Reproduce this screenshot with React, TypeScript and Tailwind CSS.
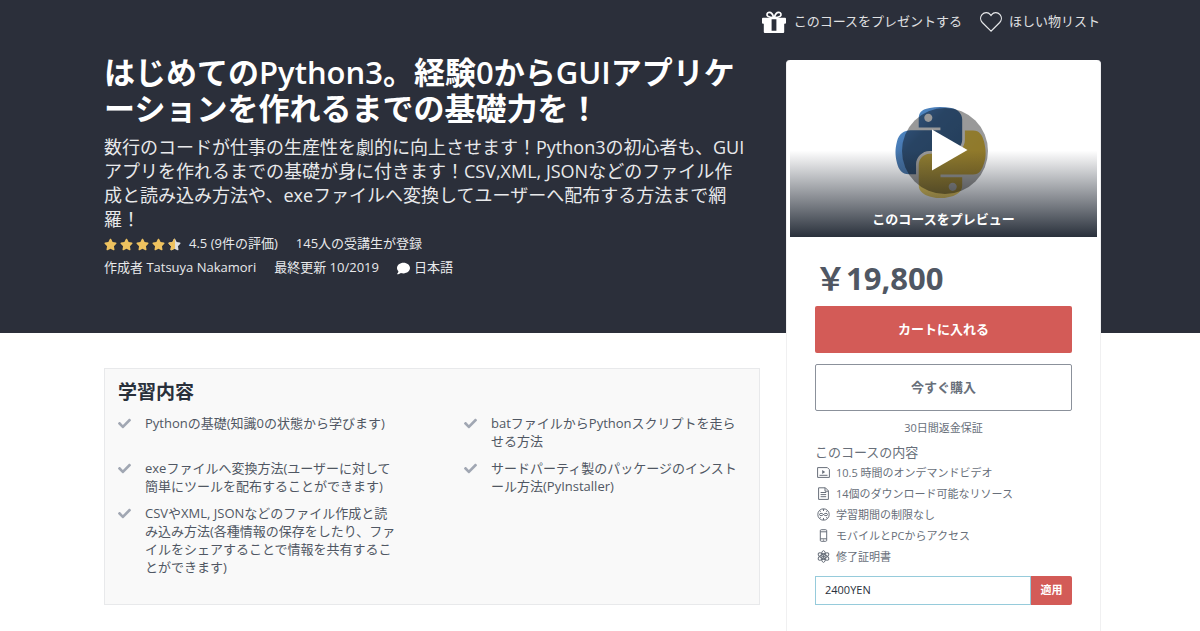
import React from 'react';
import { FaCheck, FaComment, FaStar } from 'react-icons/fa';

const learnItems = [
  'Pythonの基礎(知識0の状態から学びます)',
  'batファイルからPythonスクリプトを走らせる方法',
  'exeファイルへ変換方法(ユーザーに対して簡単にツールを配布することができます)',
  'サードパーティ製のパッケージのインストール方法(PyInstaller)',
  'CSVやXML, JSONなどのファイル作成と読み込み方法(各種情報の保存をしたり、ファイルをシェアすることで情報を共有することができます)',
];

const GiftIcon = () => (
  <svg viewBox="0 0 24 22" className="w-6 h-[22px]" aria-hidden="true">
    <g fill="none" stroke="#fff" strokeWidth="1.7">
      <path d="M11.6 6.6C11 3.6 9.2 1.2 7 1.3 4.8 1.4 4.3 4.2 6 5.4c1.3.9 3.4 1.2 5.6 1.2z" />
      <path d="M12.4 6.6C13 3.6 14.8 1.2 17 1.3c2.2.1 2.7 2.9 1 4.1-1.3.9-3.4 1.2-5.6 1.2z" />
    </g>
    <path
      fill="#fff"
      fillRule="evenodd"
      d="M1 6.8h22a1 1 0 0 1 1 1v4a1 1 0 0 1-1 1h-.8v8.2a1 1 0 0 1-1 1H2.8a1 1 0 0 1-1-1v-8.2H1a1 1 0 0 1-1-1v-4a1 1 0 0 1 1-1zM9.6 8.2v11.6h4.8V8.2z"
    />
  </svg>
);

const HeartIcon = () => (
  <svg viewBox="0 0 22 20" className="w-[22px] h-5" fill="none" stroke="#e8e9eb" strokeWidth="1.2" aria-hidden="true">
    <path d="M11 19.2 2.3 10.5C.2 8.3.1 4.9 2 2.6 4.3.1 8.3 0 10.3 2.6L11 3.5l.7-.9C13.7 0 17.7.1 20 2.6c1.9 2.3 1.8 5.7-.3 7.9z" />
  </svg>
);

const PythonLogo = () => (
  <svg viewBox="0 0 111 112" className="w-[91px] h-[91px]" aria-hidden="true">
    <defs>
      <linearGradient id="pyBlue" x1="0" y1="0" x2="1" y2="1">
        <stop offset="0" stopColor="#5a9fd4" />
        <stop offset=".3" stopColor="#4a7db8" />
        <stop offset=".4" stopColor="#4472a6" />
        <stop offset="1" stopColor="#3a6593" />
      </linearGradient>
      <linearGradient id="pyYellow" x1="0" y1="0" x2="1" y2="1">
        <stop offset="0" stopColor="#f2d65a" />
        <stop offset="1" stopColor="#f0c33c" />
      </linearGradient>
    </defs>
    <path
      fill="url(#pyBlue)"
      d="M54.9 0C50.3 0 46 .4 42.1 1.1 30.8 3.1 28.7 7.3 28.7 15v10.2h26.7v3.4H18.7c-7.8 0-14.6 4.7-16.7 13.5-2.5 10.2-2.6 16.6 0 27.2 1.9 7.9 6.4 13.5 14.2 13.5h9.2V70.6c0-8.8 7.6-16.6 16.7-16.6h26.7c7.4 0 13.4-6.1 13.4-13.6V15c0-7.2-6.1-12.7-13.4-13.9C64.1.4 59.5 0 54.9 0zM40.5 8.2c2.8 0 5 2.3 5 5.1s-2.2 5.1-5 5.1-5-2.3-5-5.1 2.2-5.1 5-5.1z"
    />
    <path
      fill="url(#pyYellow)"
      d="M85.5 28.7v11.9c0 9.2-7.8 17-16.7 17H42.1c-7.3 0-13.4 6.3-13.4 13.6v25.5c0 7.2 6.3 11.5 13.4 13.6 8.5 2.5 16.6 2.9 26.7 0 6.7-1.9 13.4-5.9 13.4-13.6V86.4H55.5v-3.4h40.1c7.8 0 10.7-5.4 13.4-13.5 2.8-8.4 2.7-16.5 0-27.2-1.9-7.7-5.6-13.5-13.4-13.5H85.5zM70.5 93.2c2.8 0 5 2.3 5 5.1s-2.2 5.1-5 5.1-5-2.3-5-5.1 2.2-5.1 5-5.1z"
    />
  </svg>
);

const HalfStar = () => (
  <span className="relative block">
    <FaStar className="text-[#dedfe0]" />
    <span className="absolute inset-y-0 left-0 w-1/2 overflow-hidden">
      <FaStar className="text-[#eec25f]" />
    </span>
  </span>
);

const includes: Array<{ label: string; icon: React.ReactNode }> = [
  {
    label: '10.5 時間のオンデマンドビデオ',
    icon: (
      <>
        <path d="M.6 1.6h9.8l2 2v7.8H.6zM2.5 9.3h8" />
        <path d="M5.2 3.9v4l3-2z" fill="currentColor" stroke="none" />
      </>
    ),
  },
  {
    label: '14個のダウンロード可能なリソース',
    icon: <path d="M1.6.8h6.8l3 3v8.6H1.6zM8 .8v3.4h3.4M3.6 5.5h5.6M3.6 7.6h5.6M3.6 9.7h5.6" />,
  },
  {
    label: '学習期間の制限なし',
    icon: (
      <>
        <circle cx="6.5" cy="6.5" r="5.7" />
        <path d="M6.5 1v2M6.5 10v2M2.5 2.5l1.2 1.2M10.5 2.5 9.3 3.7M2.5 10.5l1.2-1.2M10.5 10.5 9.3 9.3" />
        <path d="M6.5 6.5C5.2 4.9 2.5 4.9 2.5 6.5s2.7 1.6 4 0 4-1.6 4 0-2.7 1.6-4 0z" />
      </>
    ),
  },
  {
    label: 'モバイルとPCからアクセス',
    icon: <path d="M4.3.7h4.4a1 1 0 0 1 1 1v9.6a1 1 0 0 1-1 1H4.3a1 1 0 0 1-1-1V1.7a1 1 0 0 1 1-1zM3.3 2.8h6.4M3.3 9.8h6.4M6 11.1h1" />,
  },
  {
    label: '修了証明書',
    icon: (
      <>
        <ellipse cx="6.5" cy="6.5" rx="2.3" ry="5.9" />
        <ellipse cx="6.5" cy="6.5" rx="2.3" ry="5.9" transform="rotate(60 6.5 6.5)" />
        <ellipse cx="6.5" cy="6.5" rx="2.3" ry="5.9" transform="rotate(120 6.5 6.5)" />
        <circle cx="6.5" cy="6.5" r="1" fill="currentColor" />
      </>
    ),
  },
];

const TopLinks = () => (
  <nav className="col-start-2 col-span-3 row-start-1 h-11 flex items-center justify-end gap-[18px] pr-px text-[13px] text-[#e0e1e3]">
    <a href="#gift" className="flex items-center gap-2">
      <GiftIcon />
      このコースをプレゼントする
    </a>
    <a href="#wishlist" className="flex items-center gap-[7px]">
      <HeartIcon />
      ほしい物リスト
    </a>
  </nav>
);

const Hero = () => (
  <header className="col-start-2 row-start-2 pt-[10px] pb-[53px] text-[#e8e9eb]">
    <h1 className="text-[31px] leading-9 font-semibold text-white">
      はじめてのPython3。経験0からGUIアプリケ
      <wbr />
      ーションを作れるまでの基礎力を！
    </h1>
    <p className="mt-[9px] text-[18px] leading-6">
      数行のコードが仕事の生産性を劇的に向上させます！Python3の初心者も、GUI
      <br />
      アプリを作れるまでの基礎が身に付きます！CSV,XML, JSONなどのファイル作
      <br />
      成と読み込み方法や、exeファイルへ変換してユーザーへ配布する方法まで網
      <br />
      羅！
    </p>
    <div className="mt-px flex items-center h-6 text-[13px]">
      <span className="flex gap-[3px] mr-2">
        <FaStar className="text-[#eec25f]" />
        <FaStar className="text-[#eec25f]" />
        <FaStar className="text-[#eec25f]" />
        <FaStar className="text-[#eec25f]" />
        <HalfStar />
      </span>
      <span>4.5 (9件の評価)</span>
      <span className="ml-[18px]">145人の受講生が登録</span>
    </div>
    <div className="flex items-center h-6 gap-[18px] text-[13px]">
      <span>
        作成者 <a href="#instructor">Tatsuya Nakamori</a>
      </span>
      <span>最終更新 10/2019</span>
      <span className="flex items-center gap-1">
        <FaComment className="text-white" />
        日本語
      </span>
    </div>
  </header>
);

const LearnBox = () => (
  <section className="col-start-2 row-start-3 self-start mt-[35px] mb-[26px] px-[13px] pt-[10px] pb-[28px] border border-[#e8e9eb] bg-[#f9f9f9]">
    <h2 className="text-[19px] leading-[26px] font-semibold text-[#29303b]">学習内容</h2>
    <ul className="mt-[9px] grid grid-cols-2 gap-x-16 gap-y-[9px] text-[13px] leading-[18px] text-[#505763]">
      {learnItems.map((item) => (
        <li key={item} className="flex gap-[14px] pr-[3px]">
          <FaCheck className="mt-[3px] shrink-0 text-[#a1a7b3]" />
          <span>{item}</span>
        </li>
      ))}
    </ul>
  </section>
);

const Preview = () => (
  <button type="button" className="grid w-full h-[173px] overflow-hidden">
    <span className="[grid-area:1/1] place-self-center pt-[3px] pr-[7px]">
      <PythonLogo />
    </span>
    <span className="[grid-area:1/1] bg-linear-to-b from-transparent from-50% to-[#29303b]" />
    <svg viewBox="0 0 88 88" className="[grid-area:1/1] place-self-center w-[88px] h-[88px]" aria-hidden="true">
      <circle cx="45" cy="44" r="43" fill="#000" fillOpacity=".4" />
      <path d="M32 22.5v41L67.500 43z" fill="#fff" />
    </svg>
    <span className="[grid-area:1/1] self-end pb-2 text-[13px] leading-5 font-semibold text-white">
      このコースをプレビュー
    </span>
  </button>
);

const PurchaseCard = () => (
  <aside className="col-start-4 row-start-1 row-span-3 mt-[60px] rounded-t border-x border-[#f0f0f1] bg-white p-[3px] pt-1 text-[#686f7a]">
    <Preview />
    <div className="px-[25px] pt-[21px] pb-5">
      <p className="text-[31px] leading-10 font-bold text-[#505763]">￥19,800</p>
      <button
        type="button"
        className="mt-2 w-full h-[47px] rounded-[2px] bg-[#d35b57] text-[13px] font-semibold text-white"
      >
        カートに入れる
      </button>
      <button
        type="button"
        className="mt-[11px] w-full h-[47px] rounded-[2px] border border-[#8b919b] text-[13px] font-semibold"
      >
        今すぐ購入
      </button>
      <p className="mt-[9px] text-center text-[11px] leading-4">30日間返金保証</p>
      <h3 className="mt-[6px] text-[13px] leading-5">このコースの内容</h3>
      <ul className="text-[11px] leading-[21px]">
        {includes.map(({ label, icon }) => (
          <li key={label} className="flex items-center gap-[6px] pl-0.5">
            <svg
              viewBox="0 0 13 13"
              className="size-[13px]"
              fill="none"
              stroke="currentColor"
              aria-hidden="true"
            >
              {icon}
            </svg>
            {label}
          </li>
        ))}
      </ul>
      <form className="mt-[9px] flex h-[29px]" onSubmit={(e) => e.preventDefault()}>
        <input
          type="text"
          aria-label="クーポン"
          defaultValue="2400YEN"
          className="min-w-0 flex-1 border border-[#96cbdb] px-[9px] text-[11px] text-[#29303b] outline-none"
        />
        <button
          type="submit"
          className="w-[41px] rounded-r-[2px] bg-[#d35b57] text-[11px] font-semibold text-white"
        >
          適用
        </button>
      </form>
    </div>
  </aside>
);

export default function App() {
  return (
    <div
      lang="ja"
      className="grid min-h-screen grid-cols-[104px_minmax(0,1fr)_26px_315px_99px] grid-rows-[auto_auto_1fr] bg-white font-['Open_Sans','Noto_Sans_CJK_JP',sans-serif]"
    >
      <div className="col-span-full row-start-1 row-span-2 bg-[#2b2f3a]" />
      <TopLinks />
      <Hero />
      <LearnBox />
      <PurchaseCard />
    </div>
  );
}
